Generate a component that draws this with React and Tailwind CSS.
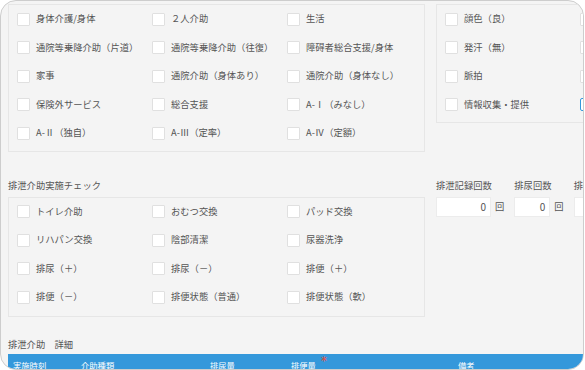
const topLeft = [
  ['身体介護/身体', '２人介助', '生活'],
  ['通院等乗降介助（片道）', '通院等乗降介助（往復）', '障碍者総合支援/身体'],
  ['家事', '通院介助（身体あり）', '通院介助（身体なし）'],
  ['保険外サービス', '総合支援', 'A-Ⅰ（みなし）'],
  ['A-Ⅱ（独自）', 'A-Ⅲ（定率）', 'A-Ⅳ（定額）'],
];

// second column is cut off by the frame, only the boxes show
const topRight = [
  [['顔色（良）', false], ['', false]],
  [['発汗（無）', false], ['', false]],
  [['脈拍', false], ['', false]],
  [['情報収集・提供', false], ['', true]],
];

const excretion = [
  ['トイレ介助', 'おむつ交換', 'パッド交換'],
  ['リハパン交換', '陰部清潔', '尿器洗浄'],
  ['排尿（＋）', '排尿（－）', '排便（＋）'],
  ['排便（－）', '排便状態（普通）', '排便状態（軟）'],
];

function Box({ checked }) {
  if (checked) {
    return (
      <span className="flex h-[13px] w-[13px] shrink-0 items-center justify-center rounded-[2px] border border-[#3498db] bg-white">
        <svg viewBox="0 0 10 10" className="h-[9px] w-[9px]">
          <path d="M2 5.2 L4.2 7.3 L8 2.8" fill="none" stroke="#3498db" strokeWidth="1.4" />
        </svg>
      </span>
    );
  }
  return <span className="h-[13px] w-[13px] shrink-0 rounded-[1px] border border-[#e0e0e0] bg-white" />;
}

function Check({ label, checked }) {
  return (
    <label className="flex h-[28.5px] w-[135px] shrink-0 items-center gap-[6px] whitespace-nowrap">
      <Box checked={checked} />
      {label && <span>{label}</span>}
    </label>
  );
}

function CountField({ label, width }) {
  return (
    <div className="flex shrink-0 flex-col">
      <div className="mb-[5px] whitespace-nowrap leading-[14px]">{label}</div>
      <div className="flex items-center">
        <div
          className={`flex h-[20px] items-center justify-end border border-[#ececec] bg-white pr-[4px] text-[10px] ${width}`}
        >
          0
        </div>
        <span className="ml-[4px]">回</span>
      </div>
    </div>
  );
}

export default function App() {
  return (
    <div className="h-[370px] w-[585px] bg-white">
      <div className="h-[370px] w-[584px] overflow-hidden rounded-[16px] border border-[#cdcdcd] bg-[#f4f4f4] pl-[7px] pt-[3px] font-[family-name:'Noto_Sans_CJK_JP',sans-serif] text-[9.3px] text-[#555]">
        {/* 上段 */}
        <div className="flex gap-[11px]">
          <div className="w-[417px] shrink-0 border border-[#e6e6e6] pb-[3px] pl-[8px]">
            {topLeft.map((row, i) => (
              <div key={i} className="flex">
                {row.map((l) => (
                  <Check key={l} label={l} />
                ))}
              </div>
            ))}
          </div>
          <div className="w-[280px] shrink-0 self-start border border-[#e6e6e6] pb-[3px] pl-[8px]">
            {topRight.map((row, i) => (
              <div key={i} className="flex">
                {row.map(([l, c], j) => (
                  <Check key={j} label={l} checked={c} />
                ))}
              </div>
            ))}
          </div>
        </div>

        {/* 排泄介助実施チェック */}
        <div className="mt-[26px] flex gap-[11px]">
          <div className="w-[417px] shrink-0">
            <div className="mb-[5px] leading-[14px]">排泄介助実施チェック</div>
            <div className="border border-[#e6e6e6] pb-[4px] pl-[8px]">
              {excretion.map((row, i) => (
                <div key={i} className="flex">
                  {row.map((l) => (
                    <Check key={l} label={l} />
                  ))}
                </div>
              ))}
            </div>
          </div>
          <div className="flex shrink-0 gap-[10px]">
            <CountField label="排泄記録回数" width="w-[55px]" />
            <CountField label="排尿回数" width="w-[36px]" />
            <CountField label="排便回数" width="w-[36px]" />
          </div>
        </div>

        {/* 詳細 */}
        <div className="mt-[20px] leading-[14px]">排泄介助　詳細</div>
        <div className="mt-[3px] flex h-[24px] w-[620px] items-start bg-[#3498db] pl-[5px] pt-[5px] text-[8.3px] leading-[12px] text-white">
          <div className="w-[68px] shrink-0">実施時刻</div>
          <div className="w-[129px] shrink-0">介助種類</div>
          <div className="w-[81px] shrink-0">排尿量</div>
          <div className="flex w-[167px] shrink-0 items-start">
            排便量
            <span className="ml-[5px] -mt-[4px] font-[family-name:'DejaVu_Sans',sans-serif] text-[12px] leading-[12px] text-[#e74c3c]">*</span>
          </div>
          <div className="shrink-0">備考</div>
        </div>
      </div>
    </div>
  );
}
